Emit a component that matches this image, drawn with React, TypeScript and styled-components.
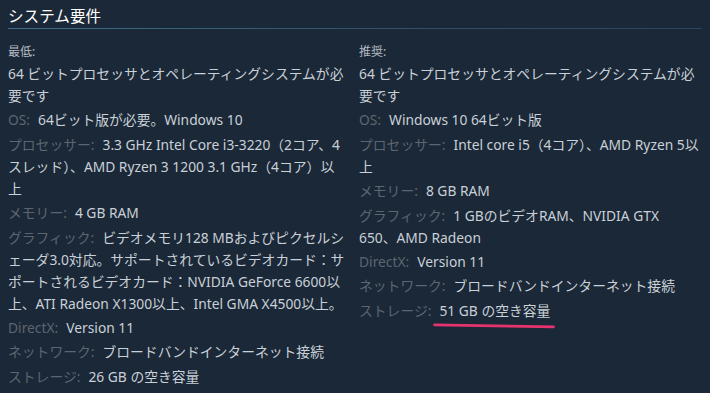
import React from "react";
import styled, { createGlobalStyle } from "styled-components";

const GlobalStyle = createGlobalStyle`
  html, body {
    margin: 0;
    padding: 0;
    background: #1b2838;
  }
  body {
    font-family: "Noto Sans", "Noto Sans CJK JP", sans-serif;
  }
`;

const Page = styled.div`
  background: #1b2838;
  min-height: 393px;
  padding: 0 8px;
  box-sizing: border-box;
`;

const Title = styled.h2`
  margin: 0;
  padding: 4px 0 3px;
  font-size: 15.6px;
  line-height: 22px;
  font-weight: 400;
  color: #ffffff;
  font-family: "Noto Sans CJK JP", sans-serif;
  background-image: linear-gradient(to right, #3f6c8b 0%, #2f5069 60%, #2a465c 100%);
  background-size: 100% 1px;
  background-position: left bottom;
  background-repeat: no-repeat;
`;

const Columns = styled.div`
  display: flex;
  gap: 3px;
  margin-top: 15px;
`;

const Column = styled.div`
  width: 348px;
  flex: none;
`;

const ColHeading = styled.div`
  font-size: 12px;
  line-height: 16px;
  color: #b3bac1;
  margin-bottom: 3px;
`;

const List = styled.ul`
  list-style: none;
  margin: 0;
  padding: 0;
`;

const Item = styled.li`
  font-size: 13.8px;
  line-height: 22px;
  color: #c9d0d7;
  margin-bottom: 2.4px;
  white-space: nowrap;
`;

const Label = styled.span`
  color: #5c6670;
  margin-right: 8px;
`;

const Marked = styled.span`
  position: relative;
  display: inline-block;
`;

const MarkSvg = styled.svg`
  position: absolute;
  left: -6px;
  top: 100%;
  margin-top: 1px;
  overflow: visible;
`;

type Req = { label?: string; lines: string[]; marked?: boolean };

const minimum: Req[] = [
  { lines: ["64 ビットプロセッサとオペレーティングシステムが必", "要です"] },
  { label: "OS:", lines: ["64ビット版が必要。Windows 10"] },
  {
    label: "プロセッサー:",
    lines: ["3.3 GHz Intel Core i3-3220（2コア、4", "スレッド）、AMD Ryzen 3 1200 3.1 GHz（4コア）以", "上"],
  },
  { label: "メモリー:", lines: ["4 GB RAM"] },
  {
    label: "グラフィック:",
    lines: [
      "ビデオメモリ128 MBおよびピクセルシ",
      "ェーダ3.0対応。サポートされているビデオカード：サ",
      "ポートされるビデオカード：NVIDIA GeForce 6600以",
      "上、ATI Radeon X1300以上、Intel GMA X4500以上。",
    ],
  },
  { label: "DirectX:", lines: ["Version 11"] },
  { label: "ネットワーク:", lines: ["ブロードバンドインターネット接続"] },
  { label: "ストレージ:", lines: ["26 GB の空き容量"] },
];

const recommended: Req[] = [
  { lines: ["64 ビットプロセッサとオペレーティングシステムが必", "要です"] },
  { label: "OS:", lines: ["Windows 10 64ビット版"] },
  { label: "プロセッサー:", lines: ["Intel core i5（4コア）、AMD Ryzen 5以", "上"] },
  { label: "メモリー:", lines: ["8 GB RAM"] },
  { label: "グラフィック:", lines: ["1 GBのビデオRAM、NVIDIA GTX", "650、AMD Radeon"] },
  { label: "DirectX:", lines: ["Version 11"] },
  { label: "ネットワーク:", lines: ["ブロードバンドインターネット接続"] },
  { label: "ストレージ:", lines: ["51 GB の空き容量"], marked: true },
];

const Underline = () => (
  <MarkSvg width="122" height="6" viewBox="0 0 122 6">
    <path d="M1.5 1.8 Q 60 2.8 120.5 3.8" stroke="#e6336e" strokeWidth="2.8" strokeLinecap="round" fill="none" />
  </MarkSvg>
);

const ReqColumn = ({ heading, items }: { heading: string; items: Req[] }) => (
  <Column>
    <ColHeading>{heading}</ColHeading>
    <List>
      {items.map((it, i) => (
        <Item key={i}>
          {it.label && <Label>{it.label}</Label>}
          {it.marked ? (
            <Marked>
              {it.lines[0]}
              <Underline />
            </Marked>
          ) : (
            it.lines.map((line, j) => (
              <React.Fragment key={j}>
                {j > 0 && <br />}
                {line}
              </React.Fragment>
            ))
          )}
        </Item>
      ))}
    </List>
  </Column>
);

export default function App() {
  return (
    <Page>
      <GlobalStyle />
      <Title>システム要件</Title>
      <Columns>
        <ReqColumn heading="最低:" items={minimum} />
        <ReqColumn heading="推奨:" items={recommended} />
      </Columns>
    </Page>
  );
}
